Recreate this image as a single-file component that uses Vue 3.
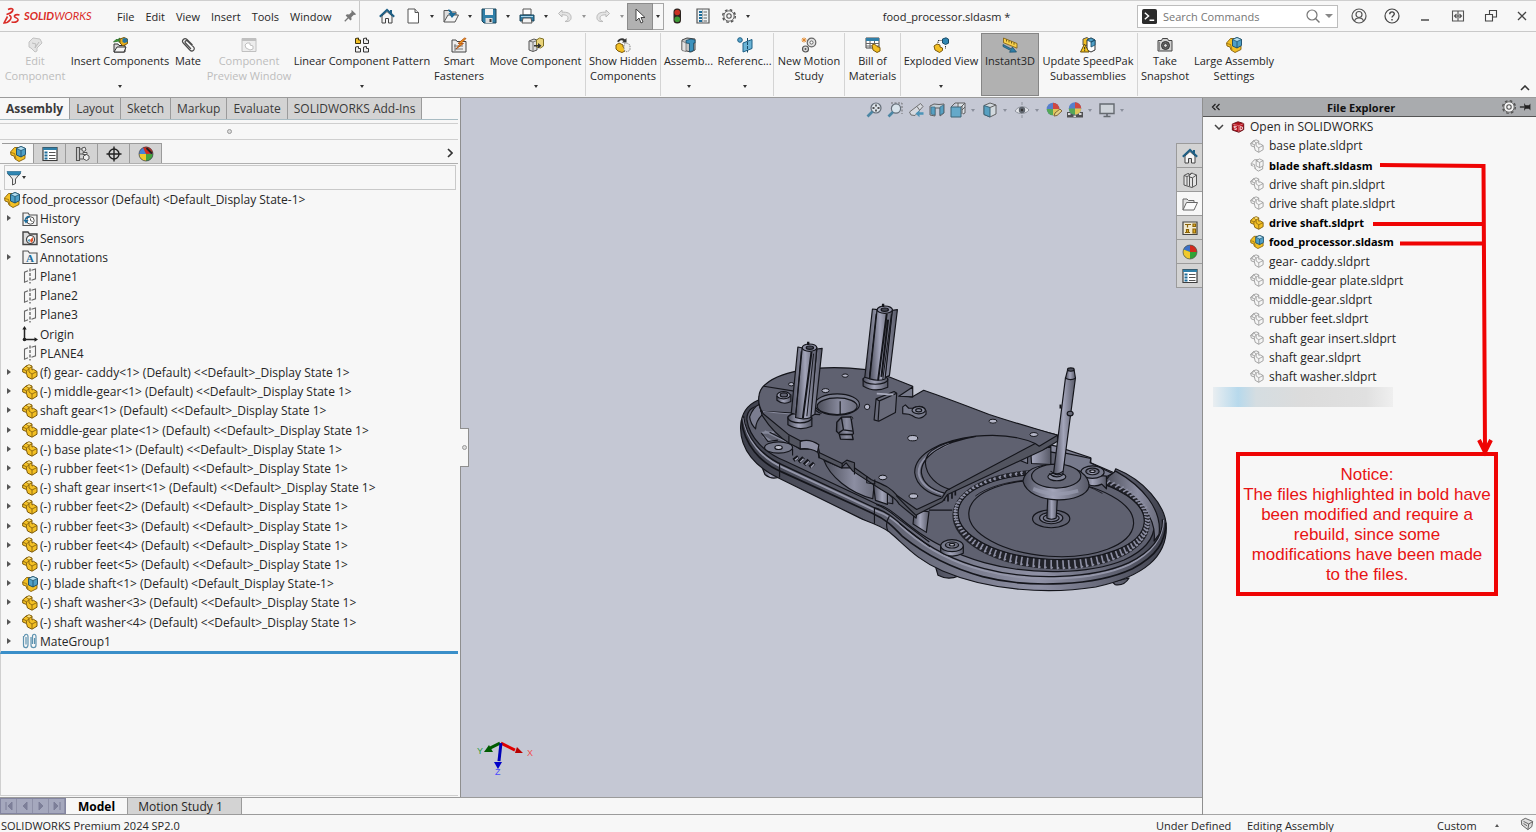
<script setup>
const menus = ['File', 'Edit', 'View', 'Insert', 'Tools', 'Window']

const quick = [
  { icon: 'home', label: 'Home', arrow: false },
  { icon: 'new', label: 'New', arrow: true },
  { icon: 'open', label: 'Open', arrow: true },
  { icon: 'save', label: 'Save', arrow: true },
  { icon: 'print', label: 'Print', arrow: true },
  { icon: 'undo', label: 'Undo', arrow: true, off: true },
  { icon: 'redo', label: 'Redo', arrow: true, off: true },
]

const ribbon = [
  { icon: 'editc', lines: ['Edit', 'Component'], w: 70, off: true },
  { icon: 'insertc', lines: ['Insert Components'], w: 100, arrow: true },
  { icon: 'clip', lines: ['Mate'], w: 36 },
  { icon: 'preview', lines: ['Component', 'Preview Window'], w: 86, off: true },
  { icon: 'pattern', lines: ['Linear Component Pattern'], w: 140, arrow: true },
  { icon: 'fastener', lines: ['Smart', 'Fasteners'], w: 54 },
  { icon: 'move', lines: ['Move Component'], w: 99, arrow: true },
  { icon: 'hidden', lines: ['Show Hidden', 'Components'], w: 75, sep: true },
  { icon: 'asmfeat', lines: ['Assemb...'], w: 56, sep: true, arrow: true },
  { icon: 'refgeo', lines: ['Referenc...'], w: 57, arrow: true },
  { icon: 'motion', lines: ['New Motion', 'Study'], w: 71, sep: true },
  { icon: 'bom', lines: ['Bill of', 'Materials'], w: 56, sep: true },
  { icon: 'explode', lines: ['Exploded View'], w: 81, sep: true, arrow: true },
  { icon: 'instant', lines: ['Instant3D'], w: 58, active: true },
  { icon: 'speedpak', lines: ['Update SpeedPak', 'Subassemblies'], w: 98 },
  { icon: 'camera', lines: ['Take', 'Snapshot'], w: 55, sep: true },
  { icon: 'asm', lines: ['Large Assembly', 'Settings'], w: 84 },
]

const tabs = ['Assembly', 'Layout', 'Sketch', 'Markup', 'Evaluate', 'SOLIDWORKS Add-Ins']
const managerTabs = [
  { icon: 'asm', label: 'FeatureManager' },
  { icon: 'list', label: 'PropertyManager' },
  { icon: 'config', label: 'ConfigurationManager' },
  { icon: 'target', label: 'DimXpertManager' },
  { icon: 'ballred', label: 'DisplayManager' },
]

const state = '(Default) <<Default>_Display State 1>'
const part = (name) => ({ icon: 'part', text: `${name} ${state}`, open: true })
const tree = [
  { icon: 'history', text: 'History', open: true },
  { icon: 'sensor', text: 'Sensors' },
  { icon: 'annot', text: 'Annotations', open: true },
  { icon: 'plane', text: 'Plane1' },
  { icon: 'plane', text: 'Plane2' },
  { icon: 'plane', text: 'Plane3' },
  { icon: 'origin', text: 'Origin' },
  { icon: 'plane', text: 'PLANE4' },
  part('(f) gear- caddy<1>'),
  part('(-) middle-gear<1>'),
  part('shaft gear<1>'),
  part('middle-gear plate<1>'),
  part('(-) base plate<1>'),
  part('(-) rubber feet<1>'),
  part('(-) shaft gear insert<1>'),
  part('(-) rubber feet<2>'),
  part('(-) rubber feet<3>'),
  part('(-) rubber feet<4>'),
  part('(-) rubber feet<5>'),
  { icon: 'asm', text: '(-) blade shaft<1> (Default) <Default_Display State-1>', open: true },
  part('(-) shaft washer<3>'),
  part('(-) shaft washer<4>'),
  { icon: 'mates', text: 'MateGroup1', open: true },
]

const hud = [
  { icon: 'zoomfit', label: 'Zoom to Fit' },
  { icon: 'zoomarea', label: 'Zoom to Area' },
  { icon: 'prev', label: 'Previous View' },
  { icon: 'section', label: 'Section View' },
  { icon: 'orient', label: 'View Orientation', arrow: true },
  { icon: 'cube', label: 'Display Style', arrow: true },
  { icon: 'eye', label: 'Hide/Show Items', arrow: true },
  { icon: 'appear', label: 'Edit Appearance' },
  { icon: 'scene', label: 'Apply Scene', arrow: true },
  { icon: 'monitor', label: 'View Settings', arrow: true },
]

const paneTabs = [
  { icon: 'home', label: 'Resources' },
  { icon: 'books', label: 'Design Library' },
  { icon: 'folder', label: 'File Explorer' },
  { icon: 'palette', label: 'View Palette' },
  { icon: 'ball', label: 'Appearances' },
  { icon: 'list', label: 'Custom Properties' },
]

const files = [
  { name: 'base plate.sldprt', icon: 'partg' },
  { name: 'blade shaft.sldasm', icon: 'asmg', bold: true },
  { name: 'drive shaft pin.sldprt', icon: 'partg' },
  { name: 'drive shaft plate.sldprt', icon: 'partg' },
  { name: 'drive shaft.sldprt', icon: 'part', bold: true },
  { name: 'food_processor.sldasm', icon: 'asm', bold: true },
  { name: 'gear- caddy.sldprt', icon: 'partg' },
  { name: 'middle-gear plate.sldprt', icon: 'partg' },
  { name: 'middle-gear.sldprt', icon: 'partg' },
  { name: 'rubber feet.sldprt', icon: 'partg' },
  { name: 'shaft gear insert.sldprt', icon: 'partg' },
  { name: 'shaft gear.sldprt', icon: 'partg' },
  { name: 'shaft washer.sldprt', icon: 'partg' },
]

// Gear teeth: short strokes round a tilted ellipse, tall at the front and flat at the back.
const teeth = []
for (let i = 0; i < 100; i++) {
  const a = (i / 100) * Math.PI * 2
  const x = 966 + 280 * Math.cos(a)
  const y = 682 + 128 * Math.sin(a) + 8 * Math.cos(a)
  const front = Math.max(0, Math.sin(a + 0.25))
  const dx = 12 * Math.cos(a)
  const dy = 8 * Math.sin(a) + 20 * front
  const r = (n) => Math.round(n)
  teeth.push(`M${r(x)} ${r(y)}l${r(dx)} ${r(dy)}l5 -3`)
}
const teethPath = teeth.join('')
</script>

<template>
  <div class="app">
    <svg class="defs" aria-hidden="true">
      <defs>
        <linearGradient id="g-rod" x1="0" x2="1" y1="0" y2="0">
          <stop offset="0" stop-color="#4c4e5c" /><stop offset=".45" stop-color="#a3a5ba" /><stop offset="1" stop-color="#565866" />
        </linearGradient>
        <linearGradient id="g-band" x1="0" x2="1" y1="0" y2="0">
          <stop offset="0" stop-color="#3f414d" /><stop offset=".3" stop-color="#5a5c6a" /><stop offset=".7" stop-color="#8f91a5" /><stop offset="1" stop-color="#3f414d" />
        </linearGradient>
        <linearGradient id="g-cone" x1="0" x2="1" y1="0" y2="0">
          <stop offset="0" stop-color="#4c4e5a" /><stop offset=".6" stop-color="#8c8ea2" /><stop offset="1" stop-color="#6a6c7b" />
        </linearGradient>
      </defs>

      <symbol id="i-part" viewBox="0 0 16 16">
        <path d="M.7 5L4 2l3-1.200L10 2v4l1.500-.7L15 7.500v4.700L10 15.200 5.500 13 4.500 9.500.7 8z" fill="#f3c024" stroke="#7d5a0c" />
        <path d="M4 2l3 2.200L10 3M7 4.200V8l3 2v5M10 10l5-2.500M.7 5l3.800 1.800L7 5M4.500 6.800V9.500" fill="none" stroke="#7d5a0c" stroke-width=".8" />
        <path d="M4.700 2.200L7 1.300l2.300 1L7 3.600z" fill="#fbe58e" />
      </symbol>
      <symbol id="i-partg" viewBox="0 0 16 16">
        <path d="M.7 5L4 2l3-1 3 1.200V6l1.500-.5L15 7.500v4.700L10 15.200 6 13 5 9 1.500 8z" fill="#f6f6f6" stroke="#8f8f8f" stroke-width=".9" />
        <path d="M4 2l3 2.500L10 3M7 4.500V8l3 2v5M10 10l5-2.500M.7 5L5 6.500 7 5M5 6.500V9M4 2L2.500 5.500" fill="none" stroke="#8f8f8f" stroke-width=".8" />
      </symbol>
      <symbol id="i-asm" viewBox="0 0 16 16">
        <path d="M.5 6l4-4.500h4V8L15 9v3.500l-6 3-4-2.500-1-3-3-1z" fill="#f3c024" stroke="#86600c" stroke-width=".9" />
        <path d="M1 6.500l3.500 1L6 13" fill="none" stroke="#86600c" stroke-width=".7" />
        <path d="M6.500 2.500l4.500-2 4.500 2v6L11 11 6.500 9z" fill="#4f9fc6" stroke="#174a66" stroke-width=".9" />
        <path d="M6.500 2.500L11 4.500l4.500-2L11 .5z" fill="#b5dff1" stroke="#174a66" stroke-width=".7" /><path d="M11 4.500V11" stroke="#174a66" stroke-width=".8" />
      </symbol>
      <symbol id="i-asmg" viewBox="0 0 16 16">
        <path d="M1.500 6l3.500-4h3.500V8L14.500 9v3.500l-5 2.500L6 12.500l-1-3-3.500-1z" fill="#f4f4f4" stroke="#8d8d8d" stroke-width=".9" />
        <path d="M7 3l4-2 4 2v6l-4 2-4-2zl4 2 4-2M11 5v6M2 6.500l3 1 1 5" fill="#f4f4f4" stroke="#8d8d8d" stroke-width=".8" />
      </symbol>
      <symbol id="i-home" viewBox="0 0 16 16">
        <path d="M3 8v7h3.500v-4.500h3V15H13V8L8 3.500z" fill="#f6f6f6" stroke="#444" />
        <path d="M.8 8.800L8 1.800l7.200 7" fill="none" stroke="#1d5f85" stroke-width="2" /><path d="M12 2v3" stroke="#1d5f85" stroke-width="2" />
      </symbol>
      <symbol id="i-new" viewBox="0 0 16 16">
        <path d="M3 1h7l3.500 3.500V15H3z" fill="#fff" stroke="#555" /><path d="M10 1v3.500h3.500" fill="#ddd" stroke="#555" />
      </symbol>
      <symbol id="i-open" viewBox="0 0 16 16">
        <path d="M1 14V2.500h5L7 4h6v3" fill="#ddd" stroke="#555" /><path d="M1 14L5 7h10.500L12 14z" fill="#f4f4f4" stroke="#555" />
        <path d="M5 2c3 0 4 2 4 5M6.500 5.500L9 9l3-3.500z" fill="#1d6c9a" stroke="#1d6c9a" stroke-width="1.200" />
      </symbol>
      <symbol id="i-save" viewBox="0 0 16 16">
        <path d="M1 1h14v14H3l-2-2z" fill="#2f7fa8" stroke="#1a4257" /><path d="M4 1h8v6H4z" fill="#f2f2f2" /><path d="M4.500 10h7v5h-7z" fill="#ddd" /><path d="M8.500 11h2v3h-2z" fill="#333" />
      </symbol>
      <symbol id="i-print" viewBox="0 0 16 16">
        <path d="M4 1h8v6H4z" fill="#fff" stroke="#555" /><path d="M1 7h14v6H1z" fill="#2f7fa8" stroke="#1a4257" /><path d="M4 10h8l1 5H3z" fill="#f3f3f3" stroke="#555" /><path d="M2 8.500h12" stroke="#a9d5ea" />
      </symbol>
      <symbol id="i-undo" viewBox="0 0 16 16">
        <path d="M5 2L1.500 5.500 5 9V6.800c4 0 6 1 6 3.200s-1.500 3-3 3.500c5 .5 6.500-2 6-5C13.500 5 10 4 5 4.200z" fill="#e4e4e4" stroke="#b9b9b9" />
      </symbol>
      <symbol id="i-redo" viewBox="0 0 16 16">
        <path d="M11 2l3.500 3.500L11 9V6.800c-4 0-6 1-6 3.200s1.500 3 3 3.500c-5 .5-6.500-2-6-5C2.500 5 6 4 11 4.200z" fill="#e4e4e4" stroke="#b9b9b9" />
      </symbol>
      <symbol id="i-cursor" viewBox="0 0 16 16">
        <path d="M4 1v12l3-3 2 5 2-1-2-4.500h4z" fill="#fff" stroke="#444" />
      </symbol>
      <symbol id="i-traffic" viewBox="0 0 16 16">
        <rect x="4.500" y=".5" width="7.500" height="15" rx="3.500" fill="#2c2420" /><circle cx="8.250" cy="4.500" r="2.800" fill="#c93022" /><circle cx="8.250" cy="11.300" r="2.800" fill="#3d9a35" />
      </symbol>
      <symbol id="i-list" viewBox="0 0 16 16">
        <path d="M1 1.500h14v13H1z" fill="#fff" stroke="#3d3d3d" stroke-width="1.200" /><path d="M1 1.500h14v2.500H1z" fill="#2f7fa8" />
        <path d="M2.500 6.500h3M2.500 9.500h3M2.500 12.500h3" stroke="#1d6c9a" stroke-width="1.800" /><path d="M7 6.500h6.500M7 9.500h6.500M7 12.500h6.500" stroke="#555" stroke-width="1.200" />
      </symbol>
      <symbol id="i-options" viewBox="0 0 16 16">
        <path d="M2 1h12v14H2z" fill="#eef3f5" stroke="#555" stroke-width="1.200" /><path d="M4 4h3M4 7h3M4 10h3M4 13h3" stroke="#1d6c9a" stroke-width="1.800" /><path d="M8.500 4H12M8.500 7H12M8.500 10H12M8.500 13H12" stroke="#666" /><path d="M7.500 1v14" stroke="#888" stroke-width=".6" />
      </symbol>
      <symbol id="i-gear" viewBox="0 0 16 16">
        <circle cx="8" cy="8" r="6.300" fill="none" stroke="#555" stroke-width="1.500" stroke-dasharray="2.600 2.350" /><circle cx="8" cy="8" r="5.200" fill="#f4f4f4" stroke="#666" /><circle cx="8" cy="8" r="2.200" fill="none" stroke="#555" stroke-width="1.100" />
      </symbol>
      <symbol id="i-pin" viewBox="0 0 16 16">
        <path d="M10 1l5 5-1.500.8-1-.3-3 3 .3 2.500L8.500 13 3 7.500 4.500 6l2.500.3 3-3-.5-1z" fill="#777" /><path d="M6 10l-4 4" stroke="#777" stroke-width="1.500" />
      </symbol>
      <symbol id="i-pinh" viewBox="0 0 16 16">
        <path d="M1 8h5" stroke="#222" stroke-width="1.500" /><path d="M6 3.500v9l1.500-2.500h4L13 12V4l-1.500 2h-4z" fill="#222" />
      </symbol>
      <symbol id="i-editc" viewBox="0 0 16 16">
        <path d="M2 5l4-4 7 1 2 4-5 5v3l-2 1-4-4-2-1z" fill="#e3e3e3" stroke="#c2c2c2" /><path d="M5 6l4 1-1 4 4-6" fill="none" stroke="#bdbdbd" />
      </symbol>
      <symbol id="i-insertc" viewBox="0 0 16 16">
        <path d="M2 15V7h4l1 1.500h6V15z" fill="#d8d8d8" stroke="#333" /><path d="M2 15l3-5h9l-2 5z" fill="#f4f4f4" stroke="#333" /><path d="M1.500 5L4 2.500h3V1l3 2-3 2.500V4z" fill="#3ea23a" stroke="#1c601b" stroke-width=".7" />
        <path d="M8 2l4-1.500 3.500 1.500v4.500L11 9 8 6z" fill="#e6ae1d" stroke="#7b590c" /><path d="M10.500 1.500l3-.5 2 1v3l-3 1-2-1z" fill="#2674a0" />
      </symbol>
      <symbol id="i-clip" viewBox="0 0 16 16">
        <path d="M12.500 8L7 2.500C4.500.2 1 3.500 3.300 6l6.500 7c2.700 2.600 6-.8 3.700-3.200L7.500 4C6 2.800 4.300 4.500 5.500 6l5.500 5.800" fill="none" stroke="#4a4a4a" stroke-width="1.200" />
      </symbol>
      <symbol id="i-preview" viewBox="0 0 16 16">
        <path d="M1 1.500h14v13H1z" fill="#ededed" stroke="#c0c0c0" /><path d="M1 3h14" stroke="#c0c0c0" stroke-width="2" /><path d="M4 8l2-2h3v2l3 1v3l-3 1-4-2z" fill="#fff" stroke="#c0c0c0" />
      </symbol>
      <symbol id="i-pattern" viewBox="0 0 16 16">
        <path d="M1.500 1.500l3-.5v2h2v3.500h-5z" fill="#f3c024" stroke="#3c3310" /><path d="M9.500 1.500l3-.5v2h2v3.500h-5zM1.500 10l3-.5v2h2V15h-5zM9.500 10l3-.5v2h2V15h-5z" fill="#eee" stroke="#333" />
      </symbol>
      <symbol id="i-fastener" viewBox="0 0 16 16">
        <path d="M1 3h4l1 1.500h9V15H1z" fill="#ececec" stroke="#444" /><path d="M3 9h9M4 12h8M4 7v7" stroke="#777" /><path d="M13.500 1L7 6.500h2.500L5 12l7.500-5.500H10l5-5z" fill="#f39a1d" stroke="#a8480c" stroke-width=".8" />
      </symbol>
      <symbol id="i-move" viewBox="0 0 16 16">
        <path d="M1 4l5-2 3 1v10l-4 1.500L1 13z" fill="#ddd" stroke="#555" /><path d="M1 4l4 1 4-1.500M5 5v9" stroke="#777" fill="none" /><path d="M8.500 3l3-2 4 1v7l-3 2-4-1z" fill="#ead479" stroke="#7f7125" /><path d="M6 8h4V6l3.500 2.700L10 11.500V9.500H6z" fill="#333" />
      </symbol>
      <symbol id="i-hidden" viewBox="0 0 16 16">
        <path d="M2 4.500C4 1 8 .5 10 2.500L11.500 1v4.500H7L8.500 4C7 2.800 5 3 4 5z" fill="#333" /><path d="M1 8l3-2 4 2v2l2 1v3l-3 1.500-4-1.500-2-2z" fill="#f3c024" stroke="#7b590c" /><path d="M9 7l3-1 3 2v5l-3 2-3-2z" fill="#eee" stroke="#888" stroke-dasharray="1.500 1" />
      </symbol>
      <symbol id="i-asmfeat" viewBox="0 0 16 16">
        <path d="M1 3l5-2 8 1v11l-4 2-9-2z" fill="#c4c4c4" stroke="#444" /><path d="M5 6V3.500l5-1.500 4 1v3h-1.500v7.500L8.500 15V6.500z" fill="#3d92bd" stroke="#174a66" stroke-width=".8" /><path d="M1 4v9.500l4 1V6z" fill="#e4e4e4" stroke="#666" stroke-width=".7" />
      </symbol>
      <symbol id="i-refgeo" viewBox="0 0 16 16">
        <circle cx="3" cy="3" r="2.300" fill="#5aa7cd" stroke="#1d5f85" /><path d="M6 6l9-3.500v9L6 15z" fill="#6bb4d6" stroke="#1d5f85" /><path d="M10.500 1v14.500" stroke="#174a66" stroke-dasharray="3 1" />
      </symbol>
      <symbol id="i-motion" viewBox="0 0 16 16">
        <circle cx="10.500" cy="5.500" r="4.300" fill="#e4e4e4" stroke="#666" stroke-width="1.200" /><circle cx="10.500" cy="5.500" r="1.600" fill="#fff" stroke="#666" /><circle cx="4.500" cy="12" r="3" fill="#ddd" stroke="#555" stroke-width="1.200" /><circle cx="4.500" cy="12" r="1" fill="#555" /><path d="M3 .5v5M.5 3h5M1.200 1.200l3.600 3.600M4.800 1.200L1.200 4.800" stroke="#e0862a" />
      </symbol>
      <symbol id="i-bom" viewBox="0 0 16 16">
        <path d="M1 1h13v10H1z" fill="#fff" stroke="#444" /><path d="M1 1h13v3H1z" fill="#2f7fa8" /><path d="M1 6.500h13M1 9h13M5 4v7M9.500 4v7" stroke="#666" /><path d="M7 8l2.500-1 2.500 2.500 3 1v3.500l-3 1.500-4-2.500z" fill="#f3c024" stroke="#7b590c" />
      </symbol>
      <symbol id="i-explode" viewBox="0 0 16 16">
        <path d="M1 9l3-2 3 1v2l2.500 1v2.500L6.500 15.500 2 13z" fill="#f3c024" stroke="#7b590c" /><path d="M9.500 2L13 .8l2.500 1.400v4l-3 1.300-3-1.500z" fill="#2f86b3" stroke="#174a66" /><path d="M5 6V3.500h3.500M12.500 9v3" stroke="#333" fill="none" stroke-dasharray="1.500 1" />
      </symbol>
      <symbol id="i-instant" viewBox="0 0 16 16">
        <path d="M1.500 1L15 6.500v4.700L1.500 5.700z" fill="#f7d04b" stroke="#7b590c" stroke-width=".8" /><path d="M4.500 2.500v2M7 3.500v2M9.500 4.500v2M12 5.700v2" stroke="#54400a" stroke-width=".8" /><path d="M1 7.500l8.500 4.500.8-2L14.500 15l-7 .2 1.200-1.700L1 9.500z" fill="#2f7fa8" stroke="#174a66" stroke-width=".7" />
      </symbol>
      <symbol id="i-speedpak" viewBox="0 0 16 16">
        <path d="M3 2l4-1.500L9 2v5l-4 2-2-1z" fill="#f3c024" stroke="#555" /><path d="M7 3l4-2 4 2v10l-4 2-4-2z" fill="#fff" stroke="#333" /><path d="M11 5l4-2v5l-4 2zM7 3l4-2 4 2-4 2z" fill="#4f9fc6" stroke="#174a66" stroke-width=".8" /><path d="M4.500 7L9 15H.5z" fill="#f9c922" stroke="#664b08" /><path d="M4.700 10v2.500M4.700 13.200v1" stroke="#222" />
      </symbol>
      <symbol id="i-camera" viewBox="0 0 16 16">
        <path d="M1 3.500h3.500l1-2h5l1 2H15V14H1z" fill="#d0d0d0" stroke="#444" /><circle cx="8.500" cy="8.500" r="4" fill="#666" stroke="#333" /><circle cx="8.500" cy="8.500" r="1.900" fill="#ddd" stroke="#333" /><path d="M2.500 5v8" stroke="#888" />
      </symbol>
      <symbol id="i-config" viewBox="0 0 16 16">
        <path d="M2.500 1.500h3v13h-3zM5.500 3h4M5.500 8h4M5.500 13h4" fill="#ccc" stroke="#555" stroke-width="1.100" /><path d="M8 2l3-.8 1 2.800-2 1.500-2-1zM9.500 10l3-1.500 2.500 1.500v3l-2.500 1.500-3-1.500zM9 6.500h4v2H9z" fill="#eee" stroke="#555" />
      </symbol>
      <symbol id="i-target" viewBox="0 0 16 16">
        <circle cx="8" cy="8" r="5" fill="none" stroke="#222" stroke-width="1.400" /><path d="M8 .5v15M.5 8h15" stroke="#222" stroke-width="1.400" />
      </symbol>
      <symbol id="i-ball" viewBox="0 0 16 16">
        <circle cx="8" cy="8" r="7" fill="#31a336" /><path d="M8 8L1.500 5.500A7 7 0 0 1 8 1z" fill="#3d70c8" /><path d="M8 8V1a7 7 0 0 1 7 7z" fill="#d42a1e" /><path d="M8 8v7a7 7 0 0 1-6.500-9.500z" fill="#f1c92c" /><circle cx="8" cy="8" r="7" fill="none" stroke="#555" stroke-width=".7" />
      </symbol>
      <symbol id="i-ballred" viewBox="0 0 16 16">
        <circle cx="8" cy="8" r="7" fill="#4682d8" /><path d="M8 8L5 1.500a7 7 0 0 1 10 6z" fill="#d42a1e" /><path d="M8 8h7a7 7 0 0 1-7 7z" fill="#46a53e" /><path d="M8 8v7a7 7 0 0 1-7-7z" fill="#f1c92c" /><path d="M8.500 2L14 7.500" stroke="#222" stroke-width="2" /><circle cx="8" cy="8" r="7" fill="none" stroke="#444" stroke-width=".7" />
      </symbol>
      <symbol id="i-funnel" viewBox="0 0 16 16">
        <path d="M1.500 3h13L9.500 9v4.500L6.500 15V9z" fill="#e9e9e9" stroke="#555" /><path d="M1 1.500h14L13.500 5h-11z" fill="#2f86b3" stroke="#1d5f85" stroke-width=".6" />
      </symbol>
      <symbol id="i-history" viewBox="0 0 16 16">
        <path d="M1 14.500V2h5l1.500 2H15v10.500z" fill="#f2f2f2" stroke="#555" stroke-width="1.200" /><circle cx="8.500" cy="9.500" r="3.700" fill="#fff" stroke="#555" /><path d="M8.500 7.500v2l2 1" stroke="#555" fill="none" /><path d="M3 9c1-3 3-4 5-3.500M2.500 9.500l1.500 2 1.500-2z" stroke="#1d6c9a" fill="#1d6c9a" stroke-width="1.100" />
      </symbol>
      <symbol id="i-sensor" viewBox="0 0 16 16">
        <path d="M1 14.500V2h5l1.500 2H15v10.500z" fill="#ddd" stroke="#444" stroke-width="1.400" /><circle cx="8.500" cy="9.500" r="4" fill="#fff" stroke="#444" stroke-width="1.200" /><path d="M8 10l3-3v4l-2 2z" fill="#e2552b" /><path d="M5.500 10l2 2.500L8 9z" fill="#3b8db5" />
      </symbol>
      <symbol id="i-annot" viewBox="0 0 16 16">
        <path d="M1 14.500V2h5l1.500 2H15v10.500z" fill="#f2f2f2" stroke="#555" stroke-width="1.200" />
      </symbol>
      <symbol id="i-plane" viewBox="0 0 16 16">
        <path d="M6 2.800L2.500 4.200v10L6 12.800M9.500 2.300L13.500 1v9.800L9.500 12.300" fill="none" stroke="#666" stroke-width="1.100" /><path d="M8 .5v15" stroke="#444" stroke-width="1.100" stroke-dasharray="3 1.500" />
      </symbol>
      <symbol id="i-origin" viewBox="0 0 16 16">
        <path d="M2.500 2v11.500H14" fill="none" stroke="#222" stroke-width="1.500" /><path d="M2.500 0l2.200 3.500H.3zM16 13.500l-3.500 2.200v-4.400z" fill="#222" /><circle cx="2.500" cy="13.500" r="1.800" fill="#222" />
      </symbol>
      <symbol id="i-mates" viewBox="0 0 16 16">
        <path d="M1.500 3v9c0 3.500 4.500 3.500 4.500 0V3.500C6 .5 2.500.5 2.500 3.500M4 4v7.500M9 4v8c0 3.500 5 3.500 5 0V3.500C14 .5 10.500.5 10.500 3.500V11M12.500 5v6" fill="none" stroke="#5e93b0" stroke-width="1.200" />
      </symbol>
      <symbol id="i-books" viewBox="0 0 16 16">
        <path d="M2 3.500L6 1.500l1.500.8L10 1l1.500.8L14.500 3v10L10 15.500 2 13z" fill="#e3e3e3" stroke="#555" /><path d="M2 3.500l3 1v9M5 4.500L7.500 3.500V14M7.500 5l3 .8v9M10.500 5.800l4-2.800M6 1.500l2 1.500 2-2" fill="none" stroke="#555" />
      </symbol>
      <symbol id="i-folder" viewBox="0 0 16 16">
        <path d="M1 14V3h4l1.500 1.500H12V7" fill="#e3e3e3" stroke="#666" /><path d="M1 14l3.500-7.500h11L12 14z" fill="#fafafa" stroke="#666" />
      </symbol>
      <symbol id="i-palette" viewBox="0 0 16 16">
        <path d="M1 2h14v12.500H1z" fill="#f2ead0" stroke="#444" stroke-width="1.200" /><path d="M3 4.500h6M5.500 4.500v3M3 12.500h5M4.500 9.500h2v3h-2zM11 4h2.500v2.500H11zM11 9h2.500v4H11z" stroke="#8a6309" fill="#eab325" stroke-width="1.200" />
      </symbol>
      <symbol id="i-zoomfit" viewBox="0 0 16 16">
        <circle cx="10" cy="6" r="5" fill="#dfe6ec" stroke="#5c6670" stroke-width="1.200" /><path d="M6.500 9.500L1.500 14.500" stroke="#3f7f9f" stroke-width="2.600" /><path d="M10 2.500v7M6.500 6h7" stroke="#444" stroke-dasharray="2 3" stroke-width="1.800" />
      </symbol>
      <symbol id="i-zoomarea" viewBox="0 0 16 16">
        <path d="M4 1h11v11" fill="none" stroke="#666" stroke-dasharray="2 1.500" /><circle cx="9" cy="6.500" r="4.600" fill="#dbe7ee" stroke="#5c6670" stroke-width="1.200" /><path d="M6 10l-4.500 4.500" stroke="#3f7f9f" stroke-width="2.600" />
      </symbol>
      <symbol id="i-prev" viewBox="0 0 16 16">
        <path d="M1.500 10L12.500 1.500l2.500 3-8 9-4-.5z" fill="#d9dde2" stroke="#666" /><path d="M9 4.500l2.500 3.500" stroke="#666" /><path d="M7.500 11.500l4-3.200v2H15.500v2.500h-4v2.400z" fill="#3f8fb5" />
      </symbol>
      <symbol id="i-section" viewBox="0 0 16 16">
        <path d="M1 4l4-2 5 .5L15 2v9l-4 3V6H6v8l-5-1z" fill="#c7d0d6" stroke="#555" /><path d="M2 5h4v8l-4-1zM11 5l3.500-2v8L11 13z" fill="#4c9cc0" stroke="#2c5f78" stroke-width=".7" />
      </symbol>
      <symbol id="i-orient" viewBox="0 0 16 16">
        <path d="M5 1h10v10l-2 1M1 5l4-4M11 5l4-4M1 15l1-1" fill="#dfe4e8" stroke="#555" /><path d="M1 5h10v10H1z" fill="#5ba6c8" stroke="#2f5a6e" /><path d="M8 1v4M12 4v8M12 8l3-3" stroke="#555" />
      </symbol>
      <symbol id="i-cube" viewBox="0 0 16 16">
        <path d="M2 3.500L8 1l6 2v9l-6 3-6-2.500z" fill="#d4dbe0" stroke="#555" /><path d="M2 3.500l6 2V15l-6-2.500z" fill="#4c9cc0" stroke="#2f5a6e" /><path d="M8 5.500l6-2.500" fill="none" stroke="#555" />
      </symbol>
      <symbol id="i-eye" viewBox="0 0 16 16">
        <path d="M1 9c3-5 10-6 14-1-3 4-10 5-14 1z" fill="#e8eaee" stroke="#8a8f98" /><circle cx="8" cy="8" r="3.200" fill="#555b64" /><circle cx="8" cy="8" r="1.200" fill="#222" /><path d="M8 0v3M8 13v3" stroke="#8a8f98" />
      </symbol>
      <symbol id="i-appear" viewBox="0 0 16 16">
        <circle cx="7" cy="7" r="6.300" fill="#4a78cc" /><path d="M7 7V.7A6.300 6.300 0 0 1 13.300 7z" fill="#d23b30" /><path d="M7 7h6.300A6.300 6.300 0 0 1 7 13.300z" fill="#e2c64c" /><path d="M7 7v6.300A6.300 6.300 0 0 1 .7 7z" fill="#4aa54a" /><path d="M8 14l1-3 5-4 2 2-5 4.500z" fill="#e9d27a" stroke="#7a5b2a" />
      </symbol>
      <symbol id="i-scene" viewBox="0 0 16 16">
        <path d="M0 10h16v5.500H0z" fill="#444" /><path d="M1 11h2.500v2H1zM12 11h2.500v2H12zM6.500 13.500H9v1.500H6.500z" fill="#ddd" /><circle cx="8" cy="6.500" r="6.200" fill="#4a78cc" /><path d="M8 6.500V.3a6.200 6.200 0 0 1 6.200 6.200z" fill="#d23b30" /><path d="M8 6.500h6.200A6.200 6.200 0 0 1 8 12.700z" fill="#e2c64c" /><path d="M8 6.500v6.200a6.200 6.200 0 0 1-6.200-6.200z" fill="#4aa54a" />
      </symbol>
      <symbol id="i-monitor" viewBox="0 0 16 16">
        <path d="M1 2h14v9.500H1z" fill="#cfd5da" stroke="#5b6066" stroke-width="1.400" /><path d="M8 11.500V14M4.500 14.500h7" stroke="#5b6066" stroke-width="1.600" />
      </symbol>
      <symbol id="i-user" viewBox="0 0 16 16">
        <circle cx="8" cy="8" r="7" fill="none" stroke="#555" stroke-width="1.200" /><circle cx="8" cy="6.500" r="3" fill="none" stroke="#555" stroke-width="1.200" /><path d="M3.500 13c.5-2 2.500-3 4.500-3s4 1 4.500 3" fill="none" stroke="#555" stroke-width="1.200" />
      </symbol>
      <symbol id="i-help" viewBox="0 0 16 16">
        <circle cx="8" cy="8" r="7" fill="none" stroke="#444" stroke-width="1.200" /><path d="M5.700 6.200c0-3 4.800-3 4.600-.2C10.200 7.700 8 7.700 8 9.500M8 11v1.600" fill="none" stroke="#444" stroke-width="1.400" />
      </symbol>
      <symbol id="i-min" viewBox="0 0 16 16"><path d="M4 12h8" stroke="#555" stroke-width="1.600" /></symbol>
      <symbol id="i-span" viewBox="0 0 16 16"><path d="M2.500 3h11v10h-11zM8 3v10M4.500 8h7M6.500 6L4.500 8l2 2M9.500 6l2 2-2 2" fill="none" stroke="#555" stroke-width="1.100" /></symbol>
      <symbol id="i-restore" viewBox="0 0 16 16"><path d="M2.500 6.500h7V13h-7zM6.500 6V2.500h7V9H10" fill="none" stroke="#444" stroke-width="1.100" /></symbol>
      <symbol id="i-close" viewBox="0 0 16 16"><path d="M4 4l8 8M12 4l-8 8" stroke="#444" stroke-width="1.300" /></symbol>
      <symbol id="i-glass" viewBox="0 0 16 16"><circle cx="7" cy="7" r="5" fill="none" stroke="#777" stroke-width="1.200" /><path d="M10.500 10.500l4 4" stroke="#777" stroke-width="1.500" /></symbol>
      <symbol id="i-swred" viewBox="0 0 16 16">
        <path d="M1.500 4.500L8 2l6.500 2v7L9 14l-7.500-2.500z" fill="#b51420" stroke="#5d0a10" /><path d="M1.500 4.500L9 6.500l5.500-2.500M9 6.500V14" stroke="#f0a0a0" stroke-width=".7" fill="none" /><path d="M6.500 7.500L3.500 7v1.500l2.500.7V11l-2.500-.7M10.500 7.500v4l2.500-1V8z" stroke="#fff" stroke-width=".9" fill="none" />
      </symbol>
      <symbol id="i-tag" viewBox="0 0 16 16"><path d="M1.500 4L6 1.500 14.500 5l-1 6L9 14.500 2 9z" fill="#ddd" stroke="#555" /><path d="M4 5l6 3 4-2.500M10 8l-1 6M4 7.500l4 2.500" fill="none" stroke="#555" /></symbol>
    </svg>

    <header class="titlebar">
      <div class="brand">
        <svg class="ds" viewBox="0 0 18 18" aria-hidden="true">
          <path d="M5 2.500c3-1.500 6-1 4.500 1.500C8.500 5.800 6 6.800 3.500 7.500M6 8.500c2.500 0 2.500 2.500 1 4.500S3 16 1 16l3.500-6.500M16.500 8c-3-.8-5.500 0-5 1.500s4 1.500 3.500 3.500c-.5 1.800-3.500 2.500-6.500 2" fill="none" stroke="#da2c27" stroke-width="1.600" />
        </svg>
        <span class="word"><b>SOLID</b>WORKS</span>
      </div>
      <nav class="menus"><button v-for="m in menus" :key="m">{{ m }}</button></nav>
      <button class="pin" aria-label="Pin menu"><svg class="ic sm"><use href="#i-pin" /></svg></button>
      <div class="quick">
        <template v-for="q in quick" :key="q.icon">
          <button class="q" :aria-label="q.label" :disabled="q.off"><svg class="ic"><use :href="'#i-' + q.icon" /></svg></button>
          <button v-if="q.arrow" class="qa" :class="{ faint: q.off }" :aria-label="q.label + ' options'"><i class="tri"></i></button>
        </template>
        <button class="sel" aria-label="Select"><svg class="ic"><use href="#i-cursor" /></svg></button>
        <button class="sela" aria-label="Select options"><i class="tri"></i></button>
        <button class="q" aria-label="Rebuild"><svg class="ic"><use href="#i-traffic" /></svg></button>
        <button class="q" aria-label="File properties"><svg class="ic"><use href="#i-options" /></svg></button>
        <button class="q" aria-label="Options"><svg class="ic"><use href="#i-gear" /></svg></button>
        <button class="qa" aria-label="Options menu"><i class="tri"></i></button>
      </div>
      <h1 class="doc">food_processor.sldasm *</h1>
      <label class="search">
        <svg class="term" viewBox="0 0 16 16" aria-hidden="true"><rect width="16" height="16" rx="2" fill="#2c2c2c" /><path d="M3 4l4 3.500L3 11M8 12h5" fill="none" stroke="#fff" stroke-width="1.500" /></svg>
        <input type="text" placeholder="Search Commands" aria-label="Search Commands" />
        <svg class="ic"><use href="#i-glass" /></svg><i class="tri grey"></i>
      </label>
      <div class="win">
        <button v-for="w in ['user', 'help', 'min', 'span', 'restore', 'close']" :key="w" :aria-label="w"><svg class="ic"><use :href="'#i-' + w" /></svg></button>
      </div>
    </header>

    <div class="ribbon">
      <button v-for="r in ribbon" :key="r.icon" class="tool" :class="{ off: r.off, sep: r.sep, active: r.active }" :disabled="r.off" :style="{ width: r.w + 'px' }">
        <svg class="ic"><use :href="'#i-' + r.icon" /></svg>
        <span v-for="l in r.lines" :key="l" class="line">{{ l }}</span>
        <i v-if="r.arrow" class="tri drop"></i>
      </button>
      <button class="collapse" aria-label="Collapse ribbon"><svg viewBox="0 0 10 6"><path d="M1 5l4-4 4 4" fill="none" stroke="#333" stroke-width="1.600" /></svg></button>
    </div>

    <div class="body">
      <div class="left-and-view">
        <div class="work">
          <aside class="manager">
            <nav class="tabs"><button v-for="(t, i) in tabs" :key="t" :class="{ on: i === 0 }">{{ t }}</button></nav>
            <div class="grip"><i></i></div>
            <nav class="mtabs">
              <button v-for="(t, i) in managerTabs" :key="t.icon" :class="{ on: i === 0 }" :aria-label="t.label"><svg class="ic"><use :href="'#i-' + t.icon" /></svg></button>
              <svg class="chev" viewBox="0 0 6 10"><path d="M1 1l4 4-4 4" fill="none" stroke="#333" stroke-width="1.600" /></svg>
            </nav>
            <label class="filter"><svg class="ic"><use href="#i-funnel" /></svg><i class="tri"></i><input type="text" aria-label="Filter tree" /></label>
            <ul class="tree">
              <li class="root"><svg class="ic"><use href="#i-asm" /></svg><span>food_processor (Default) &lt;Default_Display State-1&gt;</span></li>
              <li v-for="t in tree" :key="t.text">
                <i class="exp" :class="{ show: t.open }"></i>
                <svg class="ic" viewBox="0 0 16 16"><use :href="'#i-' + t.icon" /><text v-if="t.icon === 'annot'" class="glyph" x="8" y="13">A</text></svg>
                <span>{{ t.text }}</span>
              </li>
            </ul>
            <div class="foot"></div>
          </aside>

          <main class="viewport">
            <svg class="model" viewBox="461 98 742 700" role="img" aria-label="Food processor assembly">
              <g transform="translate(730 290) scale(.33333)" stroke="#14151b" stroke-width="3.500" stroke-linejoin="round" fill="none">
                <g fill="url(#g-rod)">
                  <path d="M98 535l8 20q22 18 46 6v-20z" /><path d="M618 830l8 28q30 16 62 2v-20zM1150 878l8 8q28 4 42-20z" />
                </g>
                <path fill="url(#g-band)" d="M33 410C35 370 55 345 85 332L200 300L980 470L1085 505v15L1155 550L1160 538C1240 570 1312 645 1312 715C1312 800 1250 860 1100 893C960 915 780 905 640 845C560 810 530 770 480 728C460 712 440 705 400 690L150 567C80 535 30 480 33 410Z" />
                <path d="M36 392C42 462 92 522 158 548L430 672C470 690 490 710 520 742C580 790 660 835 760 862C900 898 1100 890 1210 838C1285 800 1310 755 1310 700" stroke-width="5" />
                <path d="M42 385C50 452 98 508 162 535L435 662C476 676 496 694 535 728C590 775 670 820 765 844C900 880 1090 876 1200 826C1270 790 1302 745 1302 692" stroke="#9496a9" stroke-width="6" />
                <path d="M42 380C50 448 98 500 162 528L435 655C476 668 496 688 535 722C590 768 670 814 765 838C900 874 1090 870 1200 820C1270 785 1302 740 1300 690" stroke-width="4" />
                <path fill="#5f6170" d="M52 392C60 445 105 490 170 516L440 643C482 655 500 678 545 712C600 755 680 795 765 820C900 858 1080 856 1185 812C1255 780 1282 740 1275 690C1262 635 1200 590 1120 560L980 490L110 340C70 350 50 360 52 392Z" />
                <path fill="#7b7d90" d="M60 382C68 360 78 350 88 345L98 375C88 385 78 398 78 418C70 410 62 400 60 382Z" />
                <path d="M1160 545C1240 590 1300 660 1290 735L1275 755C1285 680 1220 610 1128 575L1140 560Z" fill="url(#g-cone)" />
                <path fill="#777a8c" d="M1005 490L1085 507L1083 520L1150 552L1120 568L1005 530Z" />
                <path d="M95 430l40-2M100 440l50 30M105 425l80 38" stroke="#85889a" stroke-width="6" />
                <path d="M95 430l20 26 30-4M120 428l60 30 30 20h50" />
                <ellipse cx="147" cy="474" rx="42" ry="17" fill="#777a8b" /><ellipse cx="147" cy="474" rx="11" ry="6" fill="#c0c2d0" /><path d="M189 478v20" />
                <path d="M192 512l14-10M208 518l14-14M224 526l14-14M240 533l14-12" stroke-width="11" /><path d="M196 512l10-8M212 518l10-10M228 526l10-10M244 534l10-10" stroke="#a4a6b9" stroke-width="4" />
                <path fill="url(#g-cone)" d="M283 512C300 560 360 610 430 628L435 575L375 535L335 535Z" />
                <path fill="url(#g-rod)" d="M432 585h42v60l-36-12zM474 610l16 15v18l-16-3z" />
                <path fill="url(#g-rod)" d="M555 662l44 5-8 62-40-25z" />
                <path d="M599 662l70 0M600 758L510 690Q470 655 440 645M602 772L510 702" />
                <path d="M150 520v44M435 655v48M480 680q-14 20 -5 45" />

                <ellipse cx="966" cy="690" rx="297" ry="149" fill="#22232a" stroke="none" transform="rotate(3 966 690)" />
                <path :d="teethPath" stroke="#8c8ea2" stroke-width="5" />
                <ellipse cx="966" cy="683" rx="280" ry="127" fill="#5f6170" transform="rotate(3 966 683)" />
                <ellipse cx="966" cy="687" rx="248" ry="114" transform="rotate(4 966 687)" />
                <path d="M738 620C800 570 1000 540 1120 612" stroke-width="2.500" />
                <ellipse cx="966" cy="688" rx="56" ry="27" fill="#5f6170" /><ellipse cx="966" cy="686" rx="35" ry="17" fill="#787a8c" /><ellipse cx="966" cy="686" rx="24" ry="11" />

                <g fill="url(#g-rod)">
                  <path d="M1056 552v18q30 30 62 14l14 14V560z" /><ellipse cx="1090" cy="548" rx="35" ry="19" fill="#777a8b" /><ellipse cx="1090" cy="546" rx="20" ry="10" /><ellipse cx="1090" cy="545" rx="8" ry="4" fill="#c0c2d0" />
                  <path d="M634 770v18q30 22 68 4v-22z" /><ellipse cx="668" cy="769" rx="34" ry="18" fill="#777a8b" /><ellipse cx="668" cy="767" rx="20" ry="9" /><ellipse cx="668" cy="766" rx="8" ry="4" fill="#c0c2d0" />
                  <path d="M905 492l60-22v55l-58-3zM865 510l30-12v24z" />
                </g>
                <path d="M645 622v12M656 616v20M668 610v18M678 604v14" stroke-width="5" />

                <path fill="#52545f" d="M88 340L98 378C118 410 145 440 180 462L212 478L262 478L270 505L335 535L350 520L370 545L455 600Q500 625 510 645L560 686L562 676L640 636L655 615L940 482L985 455V437L550 322Z" />
                <path fill="#5f6170" d="M88 320C90 300 98 292 108 284C160 240 280 224 410 240L480 262L550 290L530 320L548 322L583 302C650 325 720 352 780 375C860 402 930 420 985 437L930 470L918 462L652 603L638 625L562 660L505 620C480 590 460 586 425 570L375 535L375 520L352 512L338 522L270 490L265 468Q240 450 212 454L178 436L100 372C88 350 85 335 88 320Z" />
                <path fill="#8e90a4" d="M212 456q28-10 56 10l-4 22q-24-14-52-10z" /><path d="M178 438v24M268 490v16M338 522v14M375 535v20M412 560l0 20 24 4v-14M500 618q20 22 60 60" />
                <path fill="#777a8b" d="M550 292v30l-42-2z" /><path d="M103 290l100 16M92 365l180 10" /><path d="M100 366l90 8" stroke="#8a8c9f" stroke-width="3" />
                <path d="M918 462C860 436 800 434 740 440C640 452 555 490 556 550C560 590 600 614 636 622" />
                <path d="M660 462C610 485 566 510 568 552C574 588 606 604 640 614" stroke="#8d8fa3" stroke-width="6" />
                <path d="M740 441C640 458 574 500 576 550C582 586 610 602 646 611M740 441C640 456 586 480 588 520C590 560 625 590 662 600" />

                <g fill="#b5b7c8" stroke-width="3">
                  <ellipse cx="347" cy="258" rx="9" ry="5" /><ellipse cx="288" cy="303" rx="11" ry="6" /><ellipse cx="550" cy="446" rx="15" ry="8" /><ellipse cx="791" cy="395" rx="12" ry="6" /><ellipse cx="914" cy="435" rx="12" ry="6" /><ellipse cx="460" cy="564" rx="12" ry="7" /><ellipse cx="552" cy="620" rx="13" ry="7" /><ellipse cx="185" cy="284" rx="8" ry="5" /><ellipse cx="413" cy="352" rx="8" ry="8" /><ellipse cx="365" cy="386" rx="5" ry="4" />
                </g>
                <ellipse cx="323" cy="345" rx="67" ry="32" fill="#777a8b" /><ellipse cx="323" cy="350" rx="60" ry="25" fill="url(#g-cone)" /><path d="M332 335v38M258 362q10 8 18 10" />
                <path fill="url(#g-rod)" d="M142 320v12q20 16 42 4v-20z" /><ellipse cx="162" cy="317" rx="20" ry="11" fill="#9a9cb0" /><ellipse cx="163" cy="316" rx="11" ry="6" fill="#5f6170" />
                <path fill="#686a79" d="M440 328l54-22 8 5-4 58-50 26-14-4z" /><path d="M440 328l10 6-4 60M450 334l52-23" /><path d="M442 312l50 3" stroke="#a9abbd" stroke-width="5" />
                <path fill="url(#g-cone)" d="M322 398l14-15 28-1 8 50-4 4 3 14-38-1-4-16-8-8z" stroke-width="4" /><path d="M336 385l6 36 28 4M342 420l-14 10M330 435h38" stroke-width="4" />
                <path fill="#777a8b" d="M520 372v-20l8-6 10 10 12 0q30-14 40 8v10q-18 22-42 4l-10-4z" /><ellipse cx="568" cy="362" rx="20" ry="11" fill="#85889a" /><ellipse cx="568" cy="362" rx="9" ry="5" />

                <g fill="url(#g-rod)">
                  <path d="M175 382v24q34 20 72 4v-24z" /><ellipse cx="211" cy="385" rx="36" ry="15" />
                  <path d="M205 172l14 3-18 200-16-4zM262 178l16-2-22 198-14 8z" /><path d="M218 174h44l-18 210q-20 8-46 0z" />
                  <ellipse cx="240" cy="174" rx="22" ry="11" fill="#8e90a4" /><ellipse cx="241" cy="174" rx="11" ry="5" fill="#444653" />
                  <path d="M401 267v22q34 22 74 4v-26z" /><ellipse cx="438" cy="270" rx="37" ry="14" />
                  <path d="M429 58l15 2-24 207-14-4zM488 62l16-2-24 198-14 6z" /><path d="M443 60h46l-22 208q-20 8-46 0z" />
                  <ellipse cx="466" cy="60" rx="23" ry="11" fill="#8e90a4" /><ellipse cx="466" cy="60" rx="11" ry="5" fill="#444653" />
                </g>
                <path d="M246 186L220 386M472 72L446 272M476 90L456 262" stroke-width="6" /><path d="M252 192L232 380M486 74L460 270M215 185L199 370M440 72L420 260" stroke-width="3" /><path d="M236 156v10M461 42v10" stroke-width="7" />

                <path fill="url(#g-rod)" d="M956 620h29l-4 66q-14 7-28 0z" />
                <path fill="url(#g-rod)" d="M881 575C890 525 960 525 980 525C1050 530 1080 560 1080 590C1070 645 900 650 881 575Z" /><ellipse cx="981" cy="560" rx="74" ry="36" fill="#646675" />
                <path d="M912 598q65 28 135 6" stroke="#9a9cb0" stroke-width="11" opacity=".7" />
                <ellipse cx="983" cy="562" rx="27" ry="12" fill="#85889a" /><path fill="url(#g-rod)" d="M1009 264h30l-38 288q-14 8-28 0z" /><path d="M960 552q22 20 44 2M964 545q20 16 38 0" />
                <path fill="url(#g-rod)" d="M1009 266l6-24q10-8 20 0l4 24q-14 8-30 0z" /><ellipse cx="1025" cy="240" rx="10" ry="5" fill="#4c4e5a" />
                <path d="M994 345v12" stroke-width="6" /><ellipse cx="1023" cy="372" rx="9" ry="7" fill="#686a79" />
              </g>
              <g stroke-linecap="butt" fill="none">
                <path d="M500 744l-10 5" stroke="#005c00" stroke-width="3" /><path d="M484 753l5-7 4 7z" fill="#005c00" />
                <path d="M501 744l14 7" stroke="#e00000" stroke-width="3" /><path d="M523 754l-8 0 2-6z" fill="#b80000" />
                <path d="M501 744l-2 18" stroke="#0000b8" stroke-width="3" /><path d="M494 763h8l-4 7z" fill="#0000c8" />
              </g>
              <g font-family="Liberation Sans, sans-serif" font-size="9"><text x="477" y="755" fill="#2b9a3c">Y</text><text x="527" y="757" fill="#ef5050">X</text><text x="495" y="776" fill="#4a4aff">Z</text></g>
            </svg>

            <div class="hud">
              <template v-for="h in hud" :key="h.icon">
                <button class="h" :aria-label="h.label"><svg class="ic"><use :href="'#i-' + h.icon" /></svg></button>
                <i v-if="h.arrow" class="tri haze"></i>
              </template>
            </div>
            <button class="handle" aria-label="Resize panel"><i></i></button>
            <nav class="ptabs"><button v-for="(p, i) in paneTabs" :key="p.icon" :class="{ on: i === 2 }" :aria-label="p.label"><svg class="ic"><use :href="'#i-' + p.icon" /></svg></button></nav>
          </main>
        </div>

        <div class="sheets">
          <div class="nav">
            <button v-for="(d, i) in ['M2 1v8M8 1L4 5l4 4z', 'M7 1L3 5l4 4z', 'M3 1l4 4-4 4z', 'M8 1v8M2 1l4 4-4 4z']" :key="i" :aria-label="'Sheet ' + i"><svg viewBox="0 0 10 10"><path :d="d" fill="#7d7f98" stroke="#7d7f98" /></svg></button>
          </div>
          <button class="sheet on">Model</button><button class="sheet two">Motion Study 1</button>
        </div>
      </div>

      <aside class="pane">
        <header><svg class="dbl" viewBox="0 0 10 8"><path d="M4.500 1l-3 3 3 3M8.500 1l-3 3 3 3" fill="none" stroke="#222" stroke-width="1.300" /></svg><h2>File Explorer</h2><svg class="ic"><use href="#i-gear" /></svg><svg class="ic sm"><use href="#i-pinh" /></svg></header>
        <ul class="files">
          <li class="top"><svg class="down" viewBox="0 0 10 6"><path d="M1 1l4 4 4-4" fill="none" stroke="#444" stroke-width="1.500" /></svg><svg class="ic sm"><use href="#i-swred" /></svg><span>Open in SOLIDWORKS</span></li>
          <li v-for="f in files" :key="f.name" :class="{ bold: f.bold }"><svg class="ic sm"><use :href="'#i-' + f.icon" /></svg><span>{{ f.name }}</span></li>
        </ul>
        <div class="blurred"></div>
        <svg class="marks" viewBox="0 0 333 360" aria-hidden="true">
          <path d="M177 67l104 1M170 126h111M197 145.500h84M280.500 66l1.500 286" fill="none" stroke="#ef0404" stroke-width="4" />
          <path d="M276 342l6 12 6-12" fill="none" stroke="#ef0404" stroke-width="4" />
        </svg>
        <p class="notice">Notice:<br />The files highlighted in bold have been modified and require a rebuild, since some modifications have been made to the files.</p>
      </aside>
    </div>

    <footer class="status">
      <span class="ver">SOLIDWORKS Premium 2024 SP2.0</span><span class="s1">Under Defined</span><span class="s2">Editing Assembly</span><span class="s3">Custom</span><i class="tri up"></i><svg class="ic sm"><use href="#i-tag" /></svg>
    </footer>
  </div>
</template>

<style>
body { margin: 0; background: #f7f7f7; }
</style>

<style scoped>
* { box-sizing: border-box; }
.app { min-height: 100vh; display: flex; flex-direction: column; background: #f7f7f7; color: #262626; font: 12px/15px "Open Sans", "Noto Sans", sans-serif; border-top: 1px solid #cfcfcf; overflow: hidden; }
.defs { position: absolute; width: 0; height: 0; }
button { font: inherit; color: inherit; background: none; border: 0; padding: 0; margin: 0; display: flex; align-items: center; justify-content: center; white-space: nowrap; }
input { font: inherit; border: 0; outline: 0; background: none; padding: 0; min-width: 0; }
ul { list-style: none; margin: 0; padding: 0; }
.ic { width: 16px; height: 16px; flex: none; display: block; }
.ic.sm { width: 14px; height: 14px; }
.glyph { font: 700 11px "Liberation Serif", serif; fill: #1d6c9a; text-anchor: middle; }
.tri { flex: none; width: 0; height: 0; border: 2px solid transparent; border-top: 3px solid #333; border-bottom: 0; }
.tri.grey { border-width: 4px; border-bottom: 0; border-top: 4px solid #888; }
.tri.haze { border-top-color: #8b909c; margin: 0 4px 0 3px; }
.tri.up { border-top: 0; border-bottom: 3px solid #555; }

.titlebar { height: 31px; display: flex; align-items: center; border-bottom: 1px solid #c9c9c9; font-size: 11px; }
.brand { display: flex; align-items: center; width: 107px; padding-left: 3px; gap: 3px; }
.ds { width: 18px; height: 18px; }
.word { color: #da2c27; font: italic 11px/14px Lato, sans-serif; }
.word b { font-weight: 700; }
.menus { display: flex; align-items: center; gap: 11px; width: 234px; padding-left: 10px; }
.pin { width: 19px; height: 30px; border-right: 1px solid #c9c9c9; }
.quick { display: flex; align-items: center; margin-left: 16px; }
.q { width: 22px; height: 26px; margin-right: 4px; }
.qa { width: 10px; height: 26px; margin: 0 3px 0 -1px; }
.faint { opacity: .5; }
.sel { width: 26px; height: 27px; margin-left: -3px; background: #b1b1b1; border: 1px solid #8c8c8c; }
.sela { width: 11px; height: 27px; border: 1px solid #a6a6a6; border-left: 0; margin-right: 2px; }
.doc { flex: 1; margin: 0; font-size: 11px; line-height: 15px; font-weight: 400; text-align: center; }
.search { width: 201px; height: 23px; display: flex; align-items: center; gap: 4px; padding: 0 4px; border: 1px solid #bdbdbd; background: #fff; }
.search input { flex: 1; margin-left: 2px; }
.search input::placeholder { color: #767676; opacity: 1; }
.term { width: 15px; height: 15px; flex: none; }
.win { display: flex; margin-left: 4px; }
.win button { width: 33px; height: 30px; }
.win button:last-child { width: 29px; }

.ribbon { height: 66px; display: flex; border-bottom: 1px solid #9b9b9b; position: relative; font-size: 11px; }
.tool { flex-direction: column; justify-content: flex-start; padding-top: 4px; height: 63px; margin-top: 1px; }
.tool.sep { border-left: 1px solid #d4d4d4; }
.tool.off { color: #bdbdbd; }
.tool.active { background: #b1b1b1; border: 1px solid #868686; padding-top: 3px; }
.drop { margin-top: auto; margin-bottom: 8px; }
.collapse { position: absolute; right: 6px; bottom: 6px; }
.collapse svg { width: 10px; height: 6px; }

.body { flex: 1; display: flex; }
.left-and-view { flex: 1; display: flex; flex-direction: column; border-right: 1px solid #8f8f8f; }
.work { flex: 1; display: flex; border-bottom: 1px solid #9b9b9b; }
.manager { width: 461px; border-right: 1px solid #8f8f8f; display: flex; flex-direction: column; }
.tabs { display: flex; height: 22px; margin-right: 2px; border-bottom: 1px solid #a9bcc3; }
.tabs button { background: #d3d3d3; border-right: 1px solid #9b9b9b; padding: 0 6px; height: 21px; color: #3a3a3a; }
.tabs .on { background: none; font-weight: 700; }
.grip { height: 17px; margin: 3px 2px 0 0; border-top: 1px solid #cfcfcf; border-bottom: 1px solid #cfcfcf; display: flex; align-items: center; justify-content: center; }
.grip i, .handle i { width: 5px; height: 5px; border-radius: 50%; border: 1px solid #999; background: #ddd; }
.mtabs { display: flex; height: 21px; margin: 3px 2px 0 0; padding-left: 2px; border-bottom: 1px solid #b0b0b0; align-items: flex-end; }
.mtabs button { width: 32px; height: 20px; background: #d3d3d3; border: 1px solid #9b9b9b; border-width: 1px 1px 0 0; }
.mtabs .on { background: none; }
.chev { width: 6px; height: 10px; margin: 0 5px 5px auto; }
.filter { display: flex; align-items: center; height: 25px; margin: 1px 4px 0 4px; border: 1px solid #c9c9c9; padding-left: 1px; }
.filter input { flex: 1; }
.tree { height: 464px; display: flex; flex-direction: column; border-left: 1px solid #d0d0d0; margin-right: 2px; padding-left: 3px; border-bottom: 3px solid #3a8fc9; }
.tree li { flex: 1; display: flex; align-items: center; white-space: nowrap; }
.tree span { margin-left: 2px; }
.tree li .ic { margin-left: 11px; }
.tree .root .ic { margin-left: 0; }
.exp { width: 7px; height: 7px; flex: none; }
.exp.show::before { content: ''; display: block; width: 0; height: 0; margin-left: 3px; border: 3px solid transparent; border-left: 4px solid #555; border-right: 0; }
.foot { flex: 1; margin: 0 2px 1px 0; border-left: 1px solid #d0d0d0; border-bottom: 1px solid #cfcfcf; }

.viewport { flex: 1; position: relative; background: #c5c8d4; min-width: 0; }
.model { position: absolute; inset: 0; width: 100%; height: 100%; }
.hud { position: absolute; top: 3px; right: 74px; display: flex; align-items: center; }
.h { width: 21px; height: 18px; opacity: .9; }
.handle { position: absolute; left: -1px; top: 330px; width: 9px; height: 39px; background: #f7f7f7; border: 1px solid #8f8f8f; border-left: 0; }
.ptabs { position: absolute; right: 0; top: 45px; width: 26px; border: 1px solid #9b9b9b; border-right: 0; }
.ptabs button { width: 25px; height: 24px; background: #d3d3d3; border-bottom: 1px solid #9b9b9b; }
.ptabs button:last-child { border-bottom: 0; height: 23px; }
.ptabs .on { background: #f7f7f7; }

.sheets { height: 17px; display: flex; border-bottom: 1px solid #9b9b9b; }
.nav { width: 66px; display: flex; background: #a5a8bd; border: 1px solid #8385a0; }
.nav button { flex: 1; border-right: 1px solid #8f91a8; }
.nav svg { width: 10px; height: 10px; }
.sheet { width: 61px; }
.sheet.on { font-weight: 700; color: #000; }
.sheet.two { width: 115px; background: #d3d3d3; border: 1px solid #9b9b9b; border-width: 0 1px; padding-right: 8px; }

.pane { width: 333px; position: relative; border-bottom: 1px solid #a5a5a5; }
.pane header { height: 19px; display: flex; align-items: center; background: #a9abae; border-bottom: 1px solid #555; padding: 0 3px 0 8px; gap: 2px; }
.pane h2 { flex: 1; margin: 0; font-size: 11px; line-height: 15px; font-weight: 700; text-align: center; color: #111; }
.dbl { width: 10px; height: 8px; }
.files { height: 269px; display: flex; flex-direction: column; }
.files li { flex: 1; display: flex; align-items: center; gap: 5px; padding-left: 47px; }
.files .top { padding-left: 11px; }
.down { width: 10px; height: 6px; margin-right: 2px; }
.bold { font-weight: 700; font-size: 11px; color: #000; }
.blurred { height: 20px; width: 180px; margin: 1px 0 0 10px; background: linear-gradient(90deg, #e9eef1 0, #b7d9ec 14%, #d5dde1 24%, #dcdcdc 50%, #e0e0e0 85%, #efefef 100%); }
.marks { position: absolute; left: 0; top: 0; width: 333px; height: 360px; }
.notice { position: absolute; left: 33px; top: 354px; width: 262px; height: 144px; margin: 0; border: 4px solid #ef0404; padding: 9px 3px 0; color: #e81313; font: 17px/20px "Liberation Sans", Arial, sans-serif; text-align: center; }

.status { height: 17px; display: flex; align-items: center; padding-top: 3px; white-space: nowrap; font-size: 11px; }
.ver { flex: 1; padding-left: 1px; }
.s1 { width: 91px; }
.s2 { width: 190px; }
.s3 { width: 58px; }
.status .ic { margin: 0 2px 2px 21px; }
</style>
